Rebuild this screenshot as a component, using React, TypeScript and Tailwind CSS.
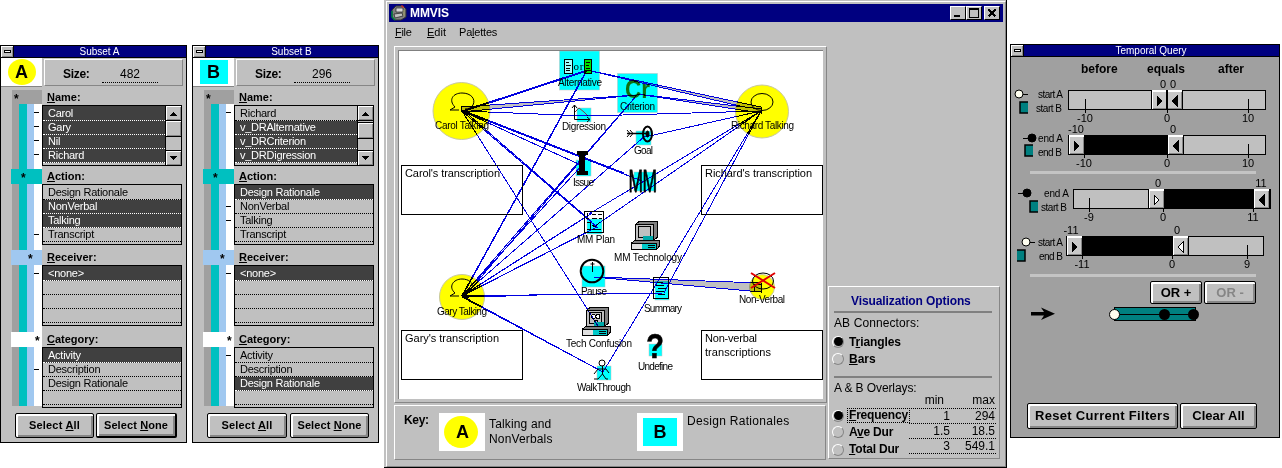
import React from "react";

const FONT = "'Liberation Sans', Arial, sans-serif";
const SERIF = "'Liberation Serif', 'Times New Roman', serif";

type TProps = {
  x: number;
  y: number;
  w?: number;
  size?: number;
  bold?: boolean;
  anchor?: "start" | "middle";
  children: string;
};

function Txt({ x, y, w, size = 10, bold, anchor = "start", children }: TProps) {
  return (
    <text
      x={x}
      y={y}
      fontFamily={FONT}
      fontSize={size}
      fontWeight={bold ? 700 : 400}
      textAnchor={anchor}
      textLength={w}
      fill="#000"
    >
      {children}
    </text>
  );
}

function Mnemonic({ text, at }: { text: string; at: number }) {
  return (
    <span className="whitespace-pre">
      {text.slice(0, at)}
      <span className="underline underline-offset-1">{text[at]}</span>
      {text.slice(at + 1)}
    </span>
  );
}

function PushButton({ className, children }: { className: string; children: React.ReactNode }) {
  return (
    <button
      className={`flex shrink-0 items-center justify-center rounded-[2px] border border-black bg-[#c0c0c0] font-bold whitespace-nowrap shadow-[inset_2px_2px_0_#fff,inset_-2px_-2px_0_#868686] ${className}`}
    >
      {children}
    </button>
  );
}

function SmallTitle({ text }: { text: string }) {
  return (
    <div className="flex h-[12px] shrink-0 border-b border-black bg-[#000080]">
      <div className="flex w-[13px] shrink-0 items-center justify-center border-r border-black bg-[#c0c0c0] shadow-[inset_1px_1px_0_#fff,inset_-1px_-1px_0_#868686]">
        <div className="h-[3px] w-[7px] border border-black bg-white" />
      </div>
      <div className="flex-1 pr-[1px] text-center text-[10px] leading-[12px] text-white">{text}</div>
    </div>
  );
}

function Arrow({ up }: { up?: boolean }) {
  return (
    <svg width="9" height="5" viewBox="0 0 9 5" shapeRendering="crispEdges">
      <path d={up ? "M1 5 L4.500 0.500 L8 5Z" : "M1 0 L4.500 4.500 L8 0Z"} />
    </svg>
  );
}

function ScrollBar({ low }: { low?: boolean }) {
  const btn = "flex shrink-0 items-center justify-center bg-[#c0c0c0] shadow-[inset_1px_1px_0_#fff,inset_-1px_-1px_0_#868686]";
  return (
    <div className="flex w-[16px] shrink-0 flex-col border-l border-black bg-[#c0c0c0]">
      <div className={`${btn} h-[15px] border-b border-black`}>
        <Arrow up />
      </div>
      {low && <div className="h-[2px] shrink-0 border-b border-black" />}
      <div className={`${btn} h-[16px] border-b border-black`} />
      <div className="flex-1" />
      <div className={`${btn} h-[15px] border-t border-black`}>
        <Arrow />
      </div>
    </div>
  );
}

type Row = { t: string; sel?: boolean; tick?: boolean };

function List({ rows, scroll, low }: { rows: Row[]; scroll?: boolean; low?: boolean }) {
  return (
    <div className="flex h-[61px] w-[140px] shrink-0 border border-black bg-[#c0c0c0]">
      <div className="min-w-0 flex-1">
        {rows.map((r, i) => (
          <div
            key={i}
            className={`border-b border-dotted pl-[5px] text-[11px] leading-[13px] tracking-[-0.25px] whitespace-pre ${
              i === 0 ? "h-[15px] pt-px" : "h-[14px]"
            } ${r.sel ? "border-b-white bg-[#404040] text-white" : "border-b-black text-black"}`}
          >
            {r.t}
          </div>
        ))}
      </div>
      {scroll && <ScrollBar low={low} />}
    </div>
  );
}

type SectionProps = {
  title: string;
  band: string;
  head: string;
  star: string;
  body: string;
  stripes: string;
  rows: Row[];
  scroll?: boolean;
  low?: boolean;
};

function Section({ title, band, head, star, body, stripes, rows, scroll, low }: SectionProps) {
  return (
    <>
      <div className={`flex shrink-0 ${head}`}>
        <div className={`h-full shrink-0 text-[12px] leading-[18px] font-bold ${band} ${star}`}>*</div>
        <div className="pl-[5px] text-[11px] leading-[14px] font-bold">
          <Mnemonic text={title} at={0} />
        </div>
      </div>
      <div className={`flex shrink-0 pl-[11px] ${body}`}>
        <div className={`w-[7px] bg-[#a0a0a0] ${stripes}`} />
        <div className={`w-[8px] bg-[#00c0c0] ${stripes}`} />
        <div className={`w-[7px] bg-[#a0c8f0] ${stripes}`} />
        <div className={`w-[8px] bg-white pt-px ${stripes}`}>
          {rows.map((r, i) => (
            <div key={i} className="h-[14px] pt-[7px]">
              {r.tick && <div className="h-px w-[5px] bg-black" />}
            </div>
          ))}
        </div>
        <div className={scroll ? "pt-px" : ""}>
          <List rows={rows} scroll={scroll} low={low} />
        </div>
      </div>
    </>
  );
}

type SubsetProps = { id: "A" | "B"; size: string; name: Row[]; action: Row[]; category: Row[] };

function Subset({ id, size, name, action, category }: SubsetProps) {
  const none: Row[] = [{ t: "<none>", sel: true, tick: true }, { t: "" }, { t: "" }, { t: "" }];
  const isA = id === "A";
  return (
    <div className="mt-[45px] flex h-[398px] w-[187px] shrink-0 flex-col border border-black bg-[#c0c0c0]">
      <SmallTitle text={`Subset ${id}`} />
      <div className="flex h-[29px] shrink-0">
        <div className="flex w-[41px] items-center justify-center border-b border-[#868686] bg-white">
          <div
            className={`flex w-[28px] items-center justify-center pb-[1px] text-[18px] leading-none font-bold ${
              isA ? "h-[26px] rounded-[50%] bg-[#ffff00]" : "h-[24px] bg-[#00ffff]"
            }`}
          >
            {id}
          </div>
        </div>
        <div className="mt-px ml-[2px] flex h-[27px] w-[139px] border border-t-white border-r-[#868686] border-b-[#868686] border-l-white pt-[7px] pl-[18px]">
          <span className="w-[39px] text-[12px] leading-[14px] font-bold tracking-[-0.3px]">Size:</span>
          <span className="h-[16px] w-[56px] border-b border-dotted border-black text-center text-[12px] leading-[14px]">
            {size}
          </span>
        </div>
      </div>
      <div className="h-[3px] shrink-0" />
      <Section
        title="Name:"
        band="bg-[#a0a0a0]"
        head="h-[14px] pl-[11px]"
        star="w-[30px] pl-[2px]"
        body="h-[65px]"
        stripes="h-[65px]"
        rows={name}
        scroll
        low={!isA}
      />
      <Section
        title="Action:"
        band="bg-[#00c0c0]"
        head="h-[15px] pl-[10px]"
        star="w-[31px] pl-[10px]"
        body="h-[66px]"
        stripes="h-[66px]"
        rows={action}
      />
      <Section
        title="Receiver:"
        band="bg-[#a0c8f0]"
        head="h-[15px] pl-[10px]"
        star="w-[31px] pl-[17px]"
        body="h-[67px]"
        stripes="h-[67px]"
        rows={none}
      />
      <Section
        title="Category:"
        band="bg-white"
        head="h-[15px] pl-[10px]"
        star="w-[31px] pl-[24px]"
        body="h-[61px]"
        stripes="h-[59px]"
        rows={category}
      />
      <div className={`mt-[5px] flex shrink-0 pl-[14px] text-[11px] ${isA ? "gap-[2px]" : "gap-[3px]"}`}>
        <PushButton className={isA ? "h-[25px] w-[79px] tracking-[0.2px]" : "h-[25px] w-[80px] tracking-[0.2px]"}>
          <Mnemonic text="Select All" at={7} />
        </PushButton>
        <PushButton className={isA ? "h-[25px] w-[81px] border-r-2 border-b-2 tracking-[0.1px]" : "h-[25px] w-[79px] tracking-[0.1px]"}>
          <Mnemonic text="Select None" at={7} />
        </PushButton>
      </div>
    </div>
  );
}

type Pt = [number, number];
const CAROL: Pt = [462, 111];
const GARY: Pt = [462, 296];
const RICHARD: Pt = [761, 111];

const LINES: [Pt, Pt, number][] = [
  [CAROL, [587, 70], 1],
  [[462, 112], [587, 71], 1],
  [CAROL, [588, 116], 1],
  [CAROL, [642, 181], 1],
  [[462, 110], [624, 173], 1],
  [CAROL, [583, 166], 1],
  [CAROL, [598, 228], 1],
  [[463, 110], [592, 222], 1],
  [CAROL, [598, 326], 1],
  [GARY, [587, 70], 1.5],
  [GARY, [637, 95], 1],
  [[464, 297], [637, 95], 1],
  [GARY, [584, 163], 1],
  [GARY, [645, 136], 1],
  [GARY, [592, 213], 1.2],
  [GARY, [597, 227], 1.2],
  [GARY, [663, 293], 1],
  [[462, 297], [537, 295], 1.4],
  [GARY, [603, 372], 1],
  [[462, 297], [603, 372], 1],
  [RICHARD, [588, 116], 1],
  [RICHARD, [645, 137], 1],
  [RICHARD, [589, 214], 1],
  [RICHARD, [595, 226], 1],
  [RICHARD, [664, 293], 1],
  [RICHARD, [603, 372], 1],
];

const WEDGES = [
  "461,107 461,112 637,95",
  "761,107 761,111 587,70",
  "761,109 761,113 637,94",
  "761,283 761,292 594,277",
];

const CYAN: [number, number, number, number][] = [
  [559.5, 51, 40, 39],
  [617.5, 73.5, 40, 39],
  [577, 108, 14, 14],
  [636, 131, 15, 14],
  [576, 160, 15, 16],
  [634, 172, 22, 19],
  [587, 219, 15, 15],
  [582, 266, 23, 21],
  [655, 281, 14, 19],
  [597, 366, 14, 14],
  [649, 344, 13, 12],
];

const LABELS: [string, number, number, number][] = [
  ["Alternative", 558, 86, 44],
  ["Criterion", 620, 110, 35],
  ["Carol Talking", 435, 129, 54],
  ["Richard Talking", 731, 129, 63],
  ["Digression", 562, 130, 44],
  ["Goal", 634, 154, 19],
  ["Issue", 573, 186, 21],
  ["MM Plan", 577, 243, 38],
  ["MM Technology", 614, 261, 68],
  ["Gary Talking", 437, 315, 50],
  ["Pause", 581, 295, 26],
  ["Summary", 644, 312, 38],
  ["Non-Verbal", 739, 303, 46],
  ["Tech Confusion", 566, 347, 66],
  ["Undefine", 638, 370, 35],
  ["WalkThrough", 577, 391, 54],
];

const NOTES: [number, number, [string, number][]][] = [
  [401, 165, [["Carol's transcription", 95]]],
  [701, 165, [["Richard's transcription", 107]]],
  [401, 330, [["Gary's transcription", 94]]],
  [701, 330, [["Non-verbal", 52], ["transcriptions", 66]]],
];

function Computer({ x, y, face }: { x: number; y: number; face?: boolean }) {
  return (
    <g transform={`translate(${x} ${y})`} stroke="#000" shapeRendering="crispEdges">
      <path d="M4.500 3.500 L8 0.500 H26.500 V16 L22.500 19.500 H4.500Z" fill="#808080" />
      <path d="M4.500 3.500 H22.500 V19.500 H4.500Z" fill="#c0c0c0" />
      <rect x="7.500" y="5.500" width="12" height="11" fill="#c0c0c0" />
      <path d="M0.500 22 L4 19.500 H28.500 V25 L25.500 28.500 H0.500Z" fill="#808080" />
      <rect x="0.500" y="22.500" width="25" height="6" fill="#e0e0e0" />
      <rect x="11" y="23" width="14" height="5" fill="#00c8c8" stroke="none" />
      <path d="M17 24.500 H24 M17 26.500 H24" />
      <rect x="12" y="15" width="10" height="4" fill="#00a8a8" stroke="none" />
      {face && (
        <>
          <circle cx="11.500" cy="9.500" r="2" fill="#fff" />
          <circle cx="16" cy="9.500" r="2" fill="#fff" />
          <path d="M12 14.500 q2 -2 4 0" fill="none" />
        </>
      )}
    </g>
  );
}

function Canvas() {
  return (
    <svg className="block bg-white" width="424" height="348" viewBox="399 51 424 348">
      <g stroke="#c8c8a0" strokeWidth="1" fill="#ffff00">
        <circle cx="461.500" cy="111" r="28.500" />
        <circle cx="762" cy="111.500" r="26.500" />
        <circle cx="462" cy="297" r="22.500" />
        <circle cx="762" cy="287" r="12.500" />
      </g>
      <g fill="#00ffff" stroke="#c0c0c0" strokeWidth="0.500">
        {CYAN.map(([x, y, w, h]) => (
          <rect key={`${x}-${y}`} x={x} y={y} width={w} height={h} />
        ))}
      </g>
      <g fill="#fff" stroke="#000" strokeWidth="1" shapeRendering="crispEdges">
        {NOTES.map(([x, y]) => (
          <rect key={`${x}-${y}`} x={x + 0.5} y={y + 0.5} width="121" height="49" />
        ))}
      </g>

      {/* speech bubbles */}
      <g fill="none" stroke="#000" strokeWidth="1">
        <path d="M459 110 H450 L455 107 C448 100 453 93 462 93 C471 93 476 99 473 105 C471 108 468 109 465 109" />
        <ellipse cx="762" cy="102" rx="11" ry="8.500" />
        <path d="M459 296 H450 L455 293 C448 287 453 279 462 279 C469 279 473 283 473 287" />
        <ellipse cx="763" cy="281" rx="10.500" ry="8" />
      </g>

      {/* alternative */}
      <g stroke="#000" shapeRendering="crispEdges">
        <rect x="564.500" y="59.500" width="8" height="14" fill="#a0ffff" />
        <path d="M566 62.500 h3 M566 65.500 h5 M566 68.500 h4 M566 70.500 h4" />
        <rect x="584.500" y="59.500" width="7" height="14" fill="#00e000" />
        <path d="M586 62.500 h4 M586 65.500 h3 M586 68.500 h4 M586 70.500 h3" />
      </g>
      <text x="573.500" y="70" fontFamily={SERIF} fontSize="11" textLength="10">
        or
      </text>
      {/* criterion */}
      <text x="625" y="98" fontFamily={FONT} fontSize="25" fontWeight="700" fill="#107010" textLength="25" lengthAdjust="spacingAndGlyphs">
        Cr
      </text>
      {/* digression */}
      <path d="M574.500 105 V119.500 H590 M572 108 l2.500 -3 l2.500 3 M587 117 l3 2.500 l-3 2.500" fill="none" stroke="#000" />
      <path d="M575 112 l4 -4 l5 4 l4 4" fill="none" stroke="#804040" />
      {/* goal */}
      <g fill="none" stroke="#000">
        <path d="M627 133.500 H648" strokeWidth="1.500" />
        <path d="M627 130 l3 3.500 l-3 3.500 M630 130 l3 3.500 l-3 3.500" />
        <ellipse cx="647.500" cy="134" rx="4.500" ry="7.500" strokeWidth="2" />
        <ellipse cx="647.500" cy="134" rx="1.500" ry="3" fill="#000" />
      </g>
      {/* issue: an I-beam */}
      <g shapeRendering="crispEdges">
        <rect x="577" y="151" width="11" height="4" />
        <rect x="579" y="155" width="6" height="16" />
        <rect x="577" y="171" width="11" height="4" />
      </g>
      <g fontFamily={FONT} fontSize="32" stroke="#000" strokeWidth="0.800">
        <text x="628.500" y="191.500" textLength="14.500" lengthAdjust="spacingAndGlyphs">
          M
        </text>
        <text x="642.500" y="191.500" textLength="14.500" lengthAdjust="spacingAndGlyphs">
          M
        </text>
      </g>
      <text x="646" y="358" fontFamily={FONT} fontSize="35" fontWeight="700" textLength="18" lengthAdjust="spacingAndGlyphs" stroke="#000" strokeWidth="0.500">
        ?
      </text>
      {/* plan */}
      <g stroke="#000" fill="none" shapeRendering="crispEdges">
        <rect x="584.500" y="211.500" width="19" height="21" strokeWidth="1" />
        <path d="M587.500 213 v4 M592 214.500 h4 M598 214.500 h4 M586 218.500 h3 M592 218.500 h5 M599 218.500 h3 M587 222.500 h3 v7 h-3 M592 229.500 h9 M592 225 l3 2 l5 -5" />
      </g>
      <Computer x={631} y={221} />
      <Computer x={582} y={307} face />
      {/* pause */}
      <circle cx="592" cy="271" r="11.300" fill="none" stroke="#000" strokeWidth="2" />
      <path d="M592.500 262 V272 M590.500 264 h4" stroke="#000" />
      {/* summary */}
      <g stroke="#000" fill="none" shapeRendering="crispEdges">
        <rect x="653.500" y="277.500" width="15" height="21" />
        <path d="M657 282.500 h6 M656 285.500 h8 M658 288.500 h8 M656 291.500 h8 M658 294.500 h7" />
      </g>
      {/* walk through */}
      <g stroke="#000" fill="none">
        <circle cx="602" cy="363" r="3" />
        <path d="M602.500 366 V374 L598 379 H594 M602.500 374 L606 379 H608 M594 374 L598 369 H606 L609 373" />
      </g>

      {/* connectors: multiplied so that they darken over the overlays */}
      <g className="mix-blend-multiply" shapeRendering="crispEdges">
        {WEDGES.map((p) => (
          <polygon key={p} points={p} fill="#c0c0c0" stroke="#0000e0" strokeWidth="1" />
        ))}
        {LINES.map(([a, b, w], i) => (
          <line key={i} x1={a[0]} y1={a[1]} x2={b[0]} y2={b[1]} stroke="#0000e0" strokeWidth={w} />
        ))}
      </g>
      <rect x="754.500" y="284.500" width="7" height="7" fill="none" stroke="#000" />
      <path d="M751 273 L775 288 M775 273 L751 288" stroke="#e00000" strokeWidth="2" />

      {LABELS.map(([t, x, y, w]) => (
        <Txt key={t} x={x} y={y} w={w}>
          {t}
        </Txt>
      ))}
      {NOTES.map(([x, y, ls]) =>
        ls.map(([t, w], i) => (
          <Txt key={t} x={x + 4} y={y + 12 + i * 14} w={w} size={11}>
            {t}
          </Txt>
        ))
      )}
    </svg>
  );
}

function Radio({ on }: { on?: boolean }) {
  return (
    <div className="flex h-[12px] w-[12px] shrink-0 items-center justify-center rounded-full border border-t-white border-r-[#868686] border-b-[#868686] border-l-white">
      {on && <div className="h-[9px] w-[9px] rounded-full bg-black" />}
    </div>
  );
}

function OverlayRow({ text, at, min, max, on, pos }: { text: string; at: number; min: string; max: string; on?: boolean; pos: string }) {
  return (
    <div className="flex h-[15px]">
      <div className={`flex w-[77px] shrink-0 items-center ${pos}`}>
        <Radio on={on} />
        <div
          className={`ml-[4px] px-px text-[12px] leading-[13px] font-bold tracking-[-0.2px] ${
            on ? "outline-1 outline-dotted outline-black" : ""
          }`}
        >
          <Mnemonic text={text} at={at} />
        </div>
      </div>
      <div className="flex w-[87px] border-b border-dotted border-black text-right text-[12px] leading-[15px]">
        <span className="w-[41px]">{min}</span>
        <span className="w-[45px]">{max}</span>
      </div>
    </div>
  );
}

function Options() {
  return (
    <div className="mt-[240px] h-[173px] w-[172px] shrink-0 border border-t-white border-r-[#868686] border-b-[#868686] border-l-white pl-[5px]">
      <div className="mt-[7px] pl-[17px] text-[12px] leading-[14px] font-bold tracking-[-0.1px] whitespace-nowrap text-[#000080]">
        Visualization Options
      </div>
      <div className="mt-[3px] h-[2px] w-[158px] bg-[#808080]" />
      <div className="mt-[3px] text-[12px] leading-[14px] tracking-[0.1px]">AB Connectors:</div>
      <div className="mt-[3px] -ml-[2px] flex h-[17px] items-center gap-[5px] text-[12px] leading-[14px] font-bold tracking-[-0.1px]">
        <Radio on />
        <Mnemonic text="Triangles" at={1} />
      </div>
      <div className="-ml-[2px] flex h-[17px] items-center gap-[5px] text-[12px] leading-[14px] font-bold">
        <Radio />
        <Mnemonic text="Bars" at={0} />
      </div>
      <div className="mt-[9px] h-[2px] w-[158px] bg-[#808080]" />
      <div className="mt-[3px] text-[12px] leading-[14px] tracking-[-0.1px]">A &amp; B Overlays:</div>
      <div className="-mt-[1px] ml-[75px] flex h-[15px] w-[87px] border-b border-dotted border-black text-right text-[12px] leading-[12px]">
        <span className="w-[35px]">min</span>
        <span className="w-[51px]">max</span>
      </div>
      <div className="-ml-[2px] w-[166px]">
        <OverlayRow text="Frequency" at={0} min="1" max="294" on pos="-mt-[2px]" />
        <OverlayRow text="Ave Dur" at={1} min="1.5" max="18.5" pos="mt-[1px]" />
        <OverlayRow text="Total Dur" at={0} min="3" max="549.1" pos="mt-[6px]" />
      </div>
    </div>
  );
}

function WinButton({ children }: { children: React.ReactNode }) {
  return (
    <div className="flex h-[14px] w-[16px] items-center justify-center border border-t-white border-r-black border-b-black border-l-white bg-[#c0c0c0]">
      <svg width="10" height="10" viewBox="0 0 10 10" fill="none" stroke="#000" shapeRendering="crispEdges">
        {children}
      </svg>
    </div>
  );
}

function MainWindow() {
  return (
    <div className="ml-[5px] h-[468px] w-[623px] shrink-0 border-r border-b border-black bg-[#c0c0c0] pt-[1px] pl-[2px]">
      <div className="h-[466px] w-[620px] border border-t-white border-r-[#868686] border-b-[#868686] border-l-white pt-[2px] pl-[2px]">
        <div className="flex h-[18px] w-[614px] items-center bg-[#000080] pr-[3px] pl-[2px]">
          <svg width="16" height="16" viewBox="0 0 16 16">
            <path d="M1 5 L5 1 H12 L15 4 V12 L10 15 H3 L1 12Z" fill="#808080" stroke="#303030" />
            <path d="M5 3 H12 V7 H5Z" fill="#d8d8d8" stroke="#202020" strokeWidth="0.700" />
            <path d="M3 9 L11 8 L12 11 L4 13Z" fill="#c0c0c0" stroke="#202020" strokeWidth="0.700" />
            <path d="M1 6 V12 L4 15" stroke="#008040" strokeWidth="1.500" fill="none" />
            <path d="M10 1 h2 v2" stroke="#e02020" fill="none" />
            <path d="M13 5 v6" stroke="#a0a060" />
          </svg>
          <div className="ml-[3px] flex-1 text-[12px] leading-[16px] font-bold tracking-[-0.1px] text-white">MMVIS</div>
          <WinButton>
            <path d="M1 8 H7" strokeWidth="2" />
          </WinButton>
          <WinButton>
            <path d="M0.500 1 V9.500 H9.500 V1" />
            <path d="M0 1 H10" strokeWidth="2" />
          </WinButton>
          <div className="w-[2px]" />
          <WinButton>
            <path d="M1.500 1.500 L8.500 8.500 M8.500 1.500 L1.500 8.500" strokeWidth="1.600" />
          </WinButton>
        </div>
        <div className="flex h-[24px] pt-[3px] pl-[6px] text-[11px] leading-[14px]">
          <span className="w-[32px] tracking-[-0.3px]">
            <Mnemonic text="File" at={0} />
          </span>
          <span className="w-[33px]">
            <Mnemonic text="Edit" at={0} />
          </span>
          <span className="-ml-px tracking-[-0.2px]">
            <Mnemonic text="Palettes" at={2} />
          </span>
        </div>
        <div className="flex pl-[5px]">
          <div className="w-[433px] shrink-0">
            <div className="h-[357px] border border-t-white border-r-[#868686] border-b-[#868686] border-l-white pt-[3px] pl-[3px]">
              <div className="w-[425px] border-t border-l border-[#808080]">
                <Canvas />
              </div>
            </div>
            <div className="mt-[2px] flex h-[55px] w-[432px] border border-t-white border-r-[#868686] border-b-[#868686] border-l-white pt-[7px] pl-[9px]">
              <span className="w-[35px] text-[12px] leading-[14px] font-bold tracking-[-0.3px]">Key:</span>
              <div className="flex h-[38px] w-[46px] items-center bg-white pl-[5px]">
                <div className="flex h-[32px] w-[34px] items-center justify-center rounded-[50%] bg-[#ffff00] pb-[1px] pl-[3px] text-[18px] leading-none font-bold">
                  A
                </div>
              </div>
              <div className="w-[152px] pt-[4px] pl-[4px] text-[12px] leading-[15px] tracking-[0.15px]">
                Talking and
                <br />
                NonVerbals
              </div>
              <div className="flex h-[38px] w-[46px] items-center justify-center bg-white">
                <div className="flex h-[28px] w-[34px] items-center justify-center bg-[#00ffff] pb-[1px] text-[18px] leading-none font-bold">
                  B
                </div>
              </div>
              <div className="pt-px pl-[4px] text-[12px] leading-[15px] tracking-[0.3px]">Design Rationales</div>
            </div>
          </div>
          <div className="pl-[1px]">
            <Options />
          </div>
        </div>
      </div>
    </div>
  );
}

type SliderProps = {
  x: number;
  y: number;
  left: number;
  right: number;
  top: [string, number][];
  ticks: [string, number][];
  hollow?: "left" | "right";
};

function Slider({ x, y, left, right, top, ticks, hollow }: SliderProps) {
  const thumb = (tx: number, dir: "left" | "right") => (
    <g transform={`translate(${tx} ${y + 1})`}>
      <rect x="0" y="0" width="15" height="18" fill="#c8c8c8" />
      <path d="M0 18 V0 H15" fill="none" stroke="#fff" strokeWidth="2" />
      <path d="M1 17.500 H14.500 V1" fill="none" stroke="#868686" />
      <path
        d={dir === "right" ? "M5 5 L10 10 L5 15Z" : "M10 5 L5 10 L10 15Z"}
        fill={(hollow === "left" && dir === "right") || (hollow === "right" && dir === "left") ? "#fff" : "#000"}
        stroke="#000"
      />
    </g>
  );
  return (
    <g>
      <g shapeRendering="crispEdges">
        <rect x={x + 0.5} y={y + 0.5} width="197" height="19" fill="#c0c0c0" stroke="#000" />
        {right - left > 20 && <rect x={left + 15} y={y} width={right - left - 15} height="20" fill="#000" />}
        {ticks.map(([t, tx]) => (
          <path key={t} d={`M${tx + 0.5} ${t === "0" ? y + 19 : y + 9} V${y + 23}`} stroke="#000" />
        ))}
        {thumb(left, "right")}
        {thumb(right, "left")}
        <path d={`M${left - 0.5} ${y} v19 M${left + 15.5} ${y} v19 M${right - 0.5} ${y} v19 M${right + 15.5} ${y} v19`} stroke="#000" />
      </g>
      {top.map(([t, tx], i) => (
        <Txt key={i} x={tx} y={y - 2} size={11} anchor="middle">
          {t}
        </Txt>
      ))}
      {ticks.map(([t, tx]) => (
        <Txt key={t} x={tx} y={y + 32} size={11} anchor="middle">
          {t}
        </Txt>
      ))}
    </g>
  );
}

type RelationProps = {
  cx: number;
  cy: number;
  open?: boolean;
  mirrored?: boolean;
  bx: number;
  by: number;
  a: string;
  b: string;
  ax: number;
  bx2: number;
};

function Relation({ cx, cy, open, mirrored, bx, by, a, b, ax, bx2 }: RelationProps) {
  return (
    <g>
      <path d={open ? `M${cx} ${cy + 0.5} h9` : `M${cx - 9} ${cy + 0.5} h9`} stroke="#000" />
      <circle cx={cx} cy={cy} r="4" fill={open ? "#fffff0" : "#000"} stroke="#000" />
      <rect x={bx} y={by} width="8" height="11" fill="#008080" />
      <path d={mirrored ? `M${bx} ${by} h8 v11 h-8` : `M${bx + 8} ${by} h-8 v11 h8`} fill="none" stroke="#000" strokeWidth="1.500" />
      <Txt x={ax} y={cy + 4} w={25}>
        {a}
      </Txt>
      <Txt x={bx2} y={cy + 18} w={b === "end B" ? 24 : 26}>
        {b}
      </Txt>
    </g>
  );
}

function TemporalQuery() {
  return (
    <div className="mt-[44px] ml-[3px] flex h-[394px] w-[270px] shrink-0 flex-col border border-black bg-[#a0a0a0]">
      <SmallTitle text="Temporal Query" />
      <div className="mt-[4px] flex h-[16px] shrink-0 pl-[70px] text-[12px] leading-[16px] font-bold">
        <span className="w-[66px]">before</span>
        <span className="w-[71px]">equals</span>
        <span>after</span>
      </div>
      <svg className="block shrink-0" width="268" height="94" viewBox="1011 77 268 94">
        <Relation cx={1019} cy={94} open bx={1020} by={102} a="start A" b="start B" ax={1038} bx2={1036} />
        <Slider x={1068} y={90} left={1152} right={1167} top={[["0", 1163], ["0", 1173]]} ticks={[["-10", 1085], ["0", 1167], ["10", 1248]]} />
        <Relation cx={1032} cy={138} bx={1025} by={145} a="end A" b="end B" ax={1038} bx2={1038} />
        <Slider x={1068} y={135} left={1069} right={1168} top={[["-10", 1076], ["0", 1173]]} ticks={[["-10", 1084], ["0", 1167], ["10", 1248]]} />
      </svg>
      <div className="ml-[19px] h-[3px] w-[226px] shrink-0 bg-[#c4c4c4]" />
      <svg className="block shrink-0" width="268" height="100" viewBox="1011 174 268 100">
        <Relation cx={1027} cy={193} bx={1030} by={201} a="end A" b="start B" ax={1044} bx2={1041} />
        <Slider x={1073} y={189} left={1149} right={1254} hollow="left" top={[["0", 1158], ["11", 1261]]} ticks={[["-9", 1089], ["0", 1163], ["11", 1253]]} />
        <Relation cx={1026} cy={242} open mirrored bx={1017} by={250} a="start A" b="end B" ax={1038} bx2={1039} />
        <Slider x={1066} y={236} left={1067} right={1173} hollow="right" top={[["-11", 1071], ["0", 1177]]} ticks={[["-11", 1082], ["0", 1172], ["9", 1247]]} />
      </svg>
      <div className="ml-[19px] h-[3px] w-[226px] shrink-0 bg-[#c4c4c4]" />
      <div className="mt-[4px] flex shrink-0 gap-[2px] pl-[139px] text-[13px]">
        <PushButton className="h-[23px] w-[52px]">OR +</PushButton>
        <PushButton className="h-[23px] w-[52px] text-[#868686]">OR -</PushButton>
      </div>
      <svg className="mt-[2px] block shrink-0" width="268" height="18" viewBox="1011 306 268 18">
        <path d="M1031 312 H1044 L1041 307.500 L1055 313.800 L1041 320 L1044 315.500 H1031Z" />
        <rect x="1114.500" y="307.500" width="81" height="13" fill="#008080" stroke="#000" />
        <path d="M1114 314.500 H1193" stroke="#000" />
        <circle cx="1114.500" cy="314.500" r="5" fill="#fffff0" stroke="#000" />
        <circle cx="1164.500" cy="314.500" r="5.500" />
        <circle cx="1193.500" cy="314.500" r="5.500" />
      </svg>
      <div className="mt-[79px] flex shrink-0 gap-[2px] pl-[16px] text-[13px]">
        <PushButton className="h-[26px] w-[151px] tracking-[0.3px]">Reset Current Filters</PushButton>
        <PushButton className="h-[26px] w-[77px]">Clear All</PushButton>
      </div>
    </div>
  );
}

export default function App() {
  return (
    <div className="flex h-[468px] w-[1282px] items-start overflow-hidden bg-white font-['Liberation_Sans',Arial,sans-serif] text-black">
      <Subset
        id="A"
        size="482"
        name={[
          { t: "Carol", sel: true, tick: true },
          { t: "Gary", sel: true, tick: true },
          { t: "Nil", sel: true, tick: true },
          { t: "Richard", sel: true, tick: true },
        ]}
        action={[
          { t: "Design Rationale" },
          { t: "NonVerbal", sel: true },
          { t: "Talking", sel: true },
          { t: "Transcript", tick: true },
        ]}
        category={[{ t: "Activity", sel: true }, { t: "Description", tick: true }, { t: "Design Rationale" }, { t: "" }]}
      />
      <div className="w-[5px] shrink-0" />
      <Subset
        id="B"
        size="296"
        name={[
          { t: "Richard", tick: true },
          { t: "v_DRAlternative", sel: true },
          { t: "v_DRCriterion", sel: true },
          { t: "v_DRDigression", sel: true },
        ]}
        action={[
          { t: "Design Rationale", sel: true },
          { t: "NonVerbal", tick: true },
          { t: "Talking", tick: true },
          { t: "Transcript" },
        ]}
        category={[{ t: "Activity", tick: true }, { t: "Description" }, { t: "Design Rationale", sel: true }, { t: "" }]}
      />
      <MainWindow />
      <TemporalQuery />
    </div>
  );
}
